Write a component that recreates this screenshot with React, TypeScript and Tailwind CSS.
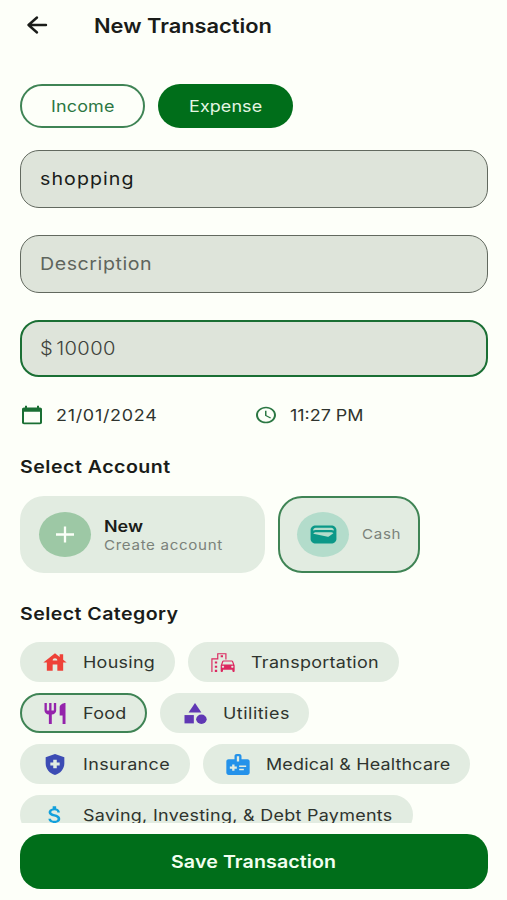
import { useState } from "react";
import type { IconType } from "react-icons";
import {
  MdAccessTime,
  MdAttachMoney,
  MdCalendarToday,
  MdCategory,
  MdEmojiTransportation,
  MdHealthAndSafety,
  MdHouse,
  MdMedicalInformation,
  MdRestaurant,
  MdWallet,
} from "react-icons/md";
import clsx from "clsx";

interface TextProps {
  children: string;
  className?: string;
}

// wide grotesque look, stretched from the left edge
const Text: React.FC<TextProps> = ({ children, className }) => (
  <span
    className={clsx(
      "block whitespace-nowrap origin-left scale-x-[1.12] leading-none",
      className
    )}
  >
    {children}
  </span>
);

interface Category {
  name: string;
  icon: IconType;
  color: string;
  width: string;
  tracking?: string;
}

const categories: Category[][] = [
  [
    { name: "Housing", icon: MdHouse, color: "text-[#ee4238]", width: "w-[155px]" },
    {
      name: "Transportation",
      icon: MdEmojiTransportation,
      color: "text-[#dc2860]",
      width: "w-[211px]",
    },
  ],
  [
    { name: "Food", icon: MdRestaurant, color: "text-[#9423ab]", width: "w-[127px]" },
    {
      name: "Utilities",
      icon: MdCategory,
      color: "text-[#6038b4]",
      width: "w-[149px]",
      tracking: "tracking-[0.45px]",
    },
  ],
  [
    {
      name: "Insurance",
      icon: MdHealthAndSafety,
      color: "text-[#3c4cb4]",
      width: "w-[170px]",
      tracking: "tracking-[0.35px]",
    },
    {
      name: "Medical & Healthcare",
      icon: MdMedicalInformation,
      color: "text-[#2492ea]",
      width: "w-[267px]",
      tracking: "tracking-[0.16px]",
    },
  ],
  [
    {
      name: "Saving, Investing, & Debt Payments",
      icon: MdAttachMoney,
      color: "text-[#12a0dc]",
      width: "w-[393px]",
    },
  ],
];

const App: React.FC = () => {
  const [category, setCategory] = useState("Food");

  return (
    <div className="flex h-[900px] w-[507px] flex-col overflow-hidden bg-[#fdfff9] px-5 font-['Inter',sans-serif] text-[#1a1c19]">
      <header className="flex h-[52px] shrink-0 items-center pl-[6px]">
        <svg width="22" height="20" viewBox="0 0 22 20" fill="none" className="-mt-[2px]">
          <path
            d="M20 10H2.5M11 2.5 2.5 10l8.5 7.5"
            stroke="currentColor"
            strokeWidth="2.4"
            strokeLinecap="round"
            strokeLinejoin="round"
          />
        </svg>
        <Text className="ml-[46px] mt-[2px] text-[19.5px] font-semibold">
          New Transaction
        </Text>
      </header>

      <div className="mt-8 flex shrink-0 gap-[13px]">
        <button className="flex h-11 w-[125px] items-center rounded-full border-2 border-[#3f8455] pl-[29px] text-[#2b7743]">
          <Text className="text-[16px] tracking-[0.15px]">Income</Text>
        </button>
        <button className="flex h-11 w-[135px] items-center rounded-full bg-[#006e1a] pl-[31px] text-[#e4f6e2]">
          <Text className="text-[16px] tracking-[0.1px]">Expense</Text>
        </button>
      </div>

      <div className="mt-[22px] flex w-[468px] shrink-0 flex-col gap-[27px]">
        <div className="flex h-[58px] items-center rounded-[19px] border border-[#62695f] bg-[#dee4da] pl-[19px]">
          <Text className="text-[17.5px] tracking-[0.95px]">shopping</Text>
        </div>
        <div className="flex h-[58px] items-center rounded-[19px] border border-[#62695f] bg-[#dee4da] pl-[19px] text-[#5f655d]">
          <Text className="text-[17.5px] tracking-[0.5px]">Description</Text>
        </div>
        <div className="flex h-[57px] items-center rounded-[19px] border-2 border-[#1a6f34] bg-[#dee4da] pl-[18px] text-[#3d423b]">
          <Text className="text-[18px] font-light tracking-[0.3px] [word-spacing:-2.5px]">
            $ 10000
          </Text>
        </div>
      </div>

      <div className="mt-7 flex h-5 shrink-0 items-center text-[#2f342e]">
        <MdCalendarToday
          preserveAspectRatio="none"
          className="h-[20px] w-[24px] text-[#1a6f34]"
        />
        <Text className="ml-3 w-[198px] text-[16px] tracking-[0.65px]">21/01/2024</Text>
        <MdAccessTime
          preserveAspectRatio="none"
          className="h-[20px] w-[24px] text-[#2b7743]"
        />
        <Text className="ml-3 text-[16px]">11:27 PM</Text>
      </div>

      <h2 className="mt-[32px] flex h-5 shrink-0 items-center">
        <Text className="text-[17.5px] font-semibold tracking-[0.43px]">
          Select Account
        </Text>
      </h2>

      <div className="mt-[19px] flex h-[77px] shrink-0 gap-[13px]">
        <div className="flex w-[245px] items-center rounded-[24px] bg-[#e2ece1] pl-[19px]">
          <div className="flex h-[45px] w-[52px] items-center justify-center rounded-[50%] bg-[#9dc8a5]">
            <svg width="18" height="17" viewBox="0 0 18 17">
              <path d="M9 0.5v16M0 8.5h18" stroke="#fbfff8" strokeWidth="2.3" />
            </svg>
          </div>
          <div className="ml-[13px] flex flex-col gap-[5px] pt-px">
            <Text className="text-[16px] font-semibold">New</Text>
            <Text className="text-[13.5px] tracking-[0.6px] text-[#7b827a]">
              Create account
            </Text>
          </div>
        </div>
        <div className="flex w-[142px] items-center rounded-[24px] border-2 border-[#3f8455] bg-[#e2ece1] pl-[17px]">
          <div className="flex h-[45px] w-[52px] items-center justify-center rounded-[50%] bg-[#b3dccb]">
            <MdWallet
              preserveAspectRatio="none"
              className="h-[27px] w-[31px] text-[#0b9888]"
            />
          </div>
          <Text className="ml-[13px] text-[13.5px] tracking-[0.6px] text-[#7b827a]">
            Cash
          </Text>
        </div>
      </div>

      <h2 className="mt-[31px] flex h-5 shrink-0 items-center">
        <Text className="text-[17.5px] font-semibold tracking-[0.38px]">
          Select Category
        </Text>
      </h2>

      <div className="mt-[18px] flex h-[181px] shrink-0 flex-col gap-[11px] overflow-hidden">
        {categories.map((row, i) => (
          <div key={i} className="flex shrink-0 gap-[13px]">
            {row.map(({ name, icon: Icon, color, width, tracking }) => (
              <button
                key={name}
                onClick={() => setCategory(name)}
                className={clsx(
                  "flex h-10 shrink-0 items-center rounded-[20px] border-2 bg-[#e2ece1] pl-[19px] text-[#2f342e]",
                  width,
                  category === name ? "border-[#3f8455]" : "border-[#e2ece1]"
                )}
              >
                <Icon
                  preserveAspectRatio="none"
                  className={clsx("h-[25px] w-[28px] shrink-0", color)}
                />
                <Text
                  className={clsx("ml-[14px] text-[16px]", tracking ?? "tracking-[0.27px]")}
                >
                  {name}
                </Text>
              </button>
            ))}
          </div>
        ))}
      </div>

      <button className="mt-[11px] flex h-[55px] w-[468px] shrink-0 items-center rounded-[21px] bg-[#006e1a] pl-[151px] pt-px text-[#f2fff0]">
        <Text className="text-[17.5px] font-semibold tracking-[0.1px]">
          Save Transaction
        </Text>
      </button>
    </div>
  );
};

export default App;
